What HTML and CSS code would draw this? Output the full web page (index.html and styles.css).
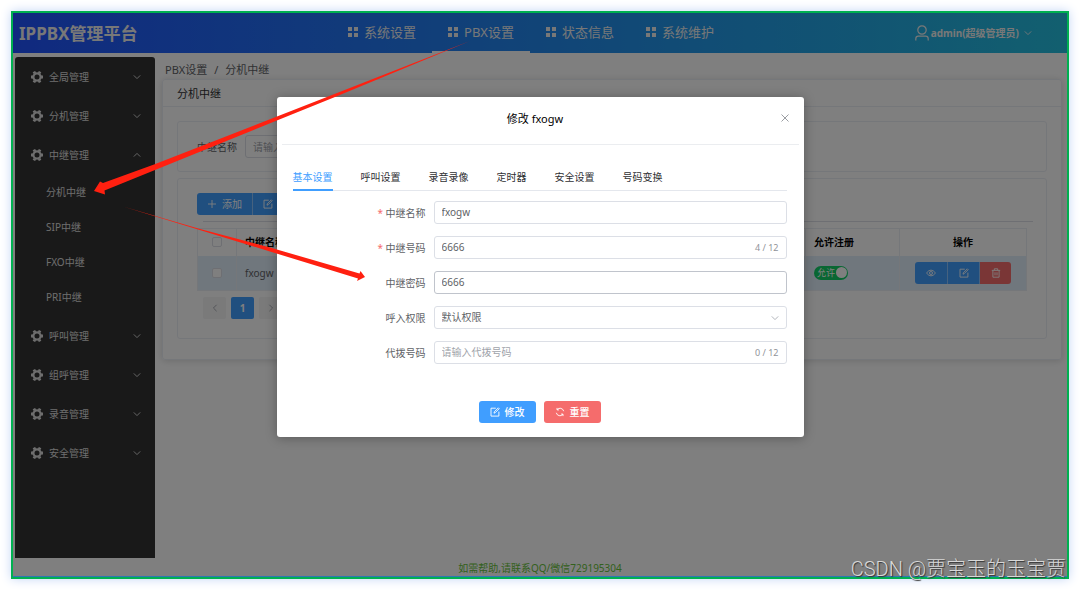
FILE: index.html
```html
<!DOCTYPE html>
<html lang="zh-CN">
<head>
<meta charset="utf-8">
<title>IPPBX管理平台</title>
<link rel="stylesheet" href="styles.css">
</head>
<body>
<svg class="defs" aria-hidden="true">
  <symbol id="grid" viewBox="0 0 10 10"><path fill="currentColor" d="M0 0h4v4H0zM6 0h4v4H6zM0 6h4v4H0zM6 6h4v4H6z"/></symbol>
  <symbol id="gear" viewBox="0 0 12 12"><circle cx="6" cy="6" r="3.600" fill="none" stroke="currentColor" stroke-width="2.200"/><path d="M2.900 .6l1 1.800M9.100 .6l-1 1.800M2.900 11.400l1-1.800M9.100 11.400l-1-1.800M0 6h2M10 6h2" stroke="currentColor" stroke-width="2.800"/></symbol>
  <symbol id="down" viewBox="0 0 8 8"><path d="M.8 2.4L4 5.6l3.2-3.2" fill="none" stroke="currentColor" stroke-width=".9"/></symbol>
  <symbol id="up" viewBox="0 0 8 8"><path d="M.8 5.6L4 2.4l3.2 3.2" fill="none" stroke="currentColor" stroke-width=".9"/></symbol>
  <symbol id="left" viewBox="0 0 8 8"><path d="M5.6 .8L2.4 4l3.2 3.2" fill="none" stroke="currentColor"/></symbol>
  <symbol id="right" viewBox="0 0 8 8"><path d="M2.4 .8L5.6 4 2.4 7.2" fill="none" stroke="currentColor"/></symbol>
  <symbol id="user" viewBox="0 0 14 16"><g fill="none" stroke="currentColor" stroke-width="1.2"><circle cx="7" cy="5" r="4.2"/><path d="M.8 15.5v-1.8q0-2.6 2.6-2.6h7.2q2.6 0 2.6 2.6v1.8"/></g></symbol>
  <symbol id="edit" viewBox="0 0 10 10"><path d="M5.8 1.2H1v7.9h7.9V4.6M4 6.2L4.3 4.8 8.3.8l.9.9-4 4z" fill="none" stroke="currentColor" stroke-width=".9"/></symbol>
  <symbol id="plus" viewBox="0 0 10 10"><path d="M5 1v8M1 5h8" stroke="currentColor" stroke-width=".9"/></symbol>
  <symbol id="eye" viewBox="0 0 10 10"><g fill="none" stroke="currentColor" stroke-width=".9"><path d="M.5 5Q5-.8 9.5 5 5 10.8.5 5z"/><circle cx="5" cy="5" r="1.5"/></g></symbol>
  <symbol id="trash" viewBox="0 0 10 10"><path d="M.8 2.4h8.4M3.3 2.2V.8h3.4v1.4M1.9 2.6v6.6h6.2V2.6M4 4.3v3M6 4.3v3" fill="none" stroke="currentColor" stroke-width=".9"/></symbol>
  <symbol id="refresh" viewBox="0 0 10 10"><path d="M8.7 4.2A3.8 3.8 0 0 0 2 2.7M2 .9v2h2M1.3 5.8A3.8 3.8 0 0 0 8 7.3M8 9.1v-2H6" fill="none" stroke="currentColor" stroke-width=".9"/></symbol>
  <symbol id="close" viewBox="0 0 10 10"><path d="M1.5 1.5l7 7M8.5 1.5l-7 7" stroke="currentColor" stroke-width=".9"/></symbol>
</svg>

<div class="frame">
  <header class="topbar">
    <h1 class="logo">IPPBX管理平台</h1>
    <nav class="topnav">
      <a href="#"><svg class="icon"><use href="#grid"/></svg>系统设置</a>
      <a href="#" class="active"><svg class="icon"><use href="#grid"/></svg>PBX设置</a>
      <a href="#"><svg class="icon"><use href="#grid"/></svg>状态信息</a>
      <a href="#"><svg class="icon"><use href="#grid"/></svg>系统维护</a>
    </nav>
    <button class="user"><svg class="user-icon"><use href="#user"/></svg>admin(超级管理员)<svg class="chev"><use href="#down"/></svg></button>
  </header>

  <div class="main">
    <nav class="sidebar">
      <a href="#" class="group"><svg class="gear"><use href="#gear"/></svg><span>全局管理</span><svg class="chev"><use href="#down"/></svg></a>
      <a href="#" class="group"><svg class="gear"><use href="#gear"/></svg><span>分机管理</span><svg class="chev"><use href="#down"/></svg></a>
      <a href="#" class="group"><svg class="gear"><use href="#gear"/></svg><span>中继管理</span><svg class="chev"><use href="#up"/></svg></a>
      <div class="submenu">
        <a href="#">分机中继</a>
        <a href="#">SIP中继</a>
        <a href="#">FXO中继</a>
        <a href="#">PRI中继</a>
      </div>
      <a href="#" class="group"><svg class="gear"><use href="#gear"/></svg><span>呼叫管理</span><svg class="chev"><use href="#down"/></svg></a>
      <a href="#" class="group"><svg class="gear"><use href="#gear"/></svg><span>组呼管理</span><svg class="chev"><use href="#down"/></svg></a>
      <a href="#" class="group"><svg class="gear"><use href="#gear"/></svg><span>录音管理</span><svg class="chev"><use href="#down"/></svg></a>
      <a href="#" class="group"><svg class="gear"><use href="#gear"/></svg><span>安全管理</span><svg class="chev"><use href="#down"/></svg></a>
    </nav>

    <main class="content">
      <div class="crumbs"><a href="#">PBX设置</a><span>/</span><span>分机中继</span></div>
      <section class="card">
        <h2 class="card-title">分机中继</h2>
        <div class="card-body">
          <form class="panel search">
            <label for="q">中继名称</label>
            <input id="q" type="text" placeholder="请输入">
          </form>
          <div class="panel list">
            <div class="tools">
              <button class="btn blue"><svg class="icon"><use href="#plus"/></svg>添加</button>
              <button class="btn blue" aria-label="修改"><svg class="icon"><use href="#edit"/></svg></button>
            </div>
            <hr class="rule">
            <table class="table">
              <colgroup><col class="c-check"><col><col class="c-reg"><col class="c-act"></colgroup>
              <thead><tr>
                <th class="mid"><input type="checkbox" class="check" aria-label="全选"></th>
                <th>中继名称</th><th>允许注册</th><th class="mid">操作</th>
              </tr></thead>
              <tbody><tr>
                <td class="mid"><input type="checkbox" class="check" aria-label="选择 fxogw"></td>
                <td>fxogw</td>
                <td><button class="switch" role="switch" aria-checked="true"><span>允许</span><i></i></button></td>
                <td class="mid"><div class="acts">
                  <button class="btn blue" aria-label="查看"><svg class="icon"><use href="#eye"/></svg></button>
                  <button class="btn blue" aria-label="编辑"><svg class="icon"><use href="#edit"/></svg></button>
                  <button class="btn red" aria-label="删除"><svg class="icon"><use href="#trash"/></svg></button>
                </div></td>
              </tr></tbody>
            </table>
            <div class="pager">
              <button aria-label="上一页"><svg class="chev"><use href="#left"/></svg></button>
              <button class="current">1</button>
              <button aria-label="下一页"><svg class="chev"><use href="#right"/></svg></button>
            </div>
          </div>
        </div>
      </section>
    </main>
  </div>
  <footer class="footer">如需帮助,请联系QQ/微信729195304</footer>

  <div class="overlay">
    <div class="dialog" role="dialog" aria-labelledby="dlg-title">
      <div class="dialog-head">
        <h2 id="dlg-title">修改 fxogw</h2>
        <button class="close" aria-label="关闭"><svg class="icon"><use href="#close"/></svg></button>
      </div>
      <div class="dialog-body">
        <div class="tabs" role="tablist">
          <button role="tab" class="on" aria-selected="true">基本设置</button>
          <button role="tab">呼叫设置</button>
          <button role="tab">录音录像</button>
          <button role="tab">定时器</button>
          <button role="tab">安全设置</button>
          <button role="tab">号码变换</button>
        </div>
        <form class="form">
          <label for="f1" class="req">中继名称</label>
          <div class="field"><input id="f1" type="text" value="fxogw"></div>
          <label for="f2" class="req">中继号码</label>
          <div class="field"><input id="f2" type="text" value="6666"><span>4 / 12</span></div>
          <label for="f3">中继密码</label>
          <div class="field hover"><input id="f3" type="text" value="6666"></div>
          <label for="f4">呼入权限</label>
          <div class="field"><select id="f4"><option>默认权限</option></select><svg class="chev"><use href="#down"/></svg></div>
          <label for="f5">代拨号码</label>
          <div class="field"><input id="f5" type="text" placeholder="请输入代拨号码"><span>0 / 12</span></div>
        </form>
        <div class="actions">
          <button class="btn blue strong"><svg class="icon"><use href="#edit"/></svg>修改</button>
          <button class="btn red strong"><svg class="icon"><use href="#refresh"/></svg>重置</button>
        </div>
      </div>
    </div>
  </div>
</div>

<svg class="arrows" viewBox="0 0 1080 590" aria-hidden="true">
  <path fill="#ff2010" d="M470 41L154 164.500 103 183 100 181.500 94 191 105 194.500 104.500 190.500 155 170 335 97z"/>
  <path fill="#ff2010" d="M123 206.500L270 251.500 358 278.500 357 281 365 277 360.500 271 359.500 273.500 270 247.500 200 229z"/>
</svg>
<div class="watermark">CSDN @贾宝玉的玉宝贾</div>
</body>
</html>
```
FILE: styles.css
```css
* { box-sizing: border-box; }
body {
  margin: 0;
  min-height: 100vh;
  padding: 11px;
  display: flex;
  position: relative;
  background: #fff;
  color: #303133;
  font: 10px/16px "Noto Sans", "Noto Sans CJK SC", sans-serif;
}
button, input, select { font: inherit; color: inherit; margin: 0; }
button { border: 0; padding: 0; background: none; cursor: pointer; }
a { color: inherit; text-decoration: none; }
h1, h2 { margin: 0; }
.defs { position: absolute; width: 0; height: 0; }
.icon { width: 10px; height: 10px; flex: none; }
.chev { width: 8px; height: 8px; flex: none; }

.frame {
  flex: 1;
  display: flex;
  flex-direction: column;
  position: relative;
  border: 2px solid #00b050;
  box-shadow: 0 0 10px #c3d5f5;
}

/* Top bar */
.topbar {
  height: 40px;
  display: flex;
  align-items: center;
  background: linear-gradient(to right, #2153ff, #24bfdf);
  color: #f0f0f0;
}
.logo { width: 319px; padding: 2px 0 0 6px; font-size: 17px; line-height: 24px; }
.topnav { display: flex; align-self: stretch; flex: 1; }
.topnav a {
  display: flex;
  align-items: center;
  gap: 6px;
  padding: 0 16px;
  font-size: 13px;
  border-bottom: 2px solid transparent;
}
.topnav .active { border-color: #fff; }
.user { display: flex; align-items: center; margin-right: 35px; font-weight: bold; }
.user-icon { width: 14px; height: 16px; margin-right: 2px; }
.user .chev { margin-left: 5px; }

/* Side menu */
.main { flex: 1; display: flex; gap: 7px; padding: 4px 5px 0 2px; }
.sidebar { width: 140px; background: #333; color: #dcdcdc; border-radius: 3px 3px 0 0; }
.group { display: flex; align-items: center; height: 39px; padding: 0 14px 0 16px; gap: 6px; }
.group span { flex: 1; }
.gear { width: 12px; height: 12px; }
.submenu { padding: 1px 0; }
.submenu a { display: block; line-height: 35px; padding-left: 31px; }

/* Content */
.content { flex: 1; min-width: 0; padding-top: 4px; }
.crumbs { display: flex; gap: 7px; padding-left: 3px; font-size: 11px; line-height: 18px; color: #606266; }
.card { border: 1px solid #ebeef5; border-radius: 3px; box-shadow: 0 1px 7px rgba(0, 0, 0, .15); }
.card-title { padding: 5px 14px 3px; font-size: 11px; line-height: 18px; font-weight: normal; border-bottom: 1px solid #ebeef5; }
.card-body { display: grid; gap: 6px; padding: 14px 14px 20px; }
.panel { border: 1px solid #ebeef5; border-radius: 3px; padding: 14px 19px; }
.search { display: flex; align-items: center; gap: 8px; padding: 13px 19px; color: #606266; }
.search input { width: 160px; height: 23px; padding: 0 7px; border: 1px solid #dcdfe6; border-radius: 3px; background: none; }
.list { padding-bottom: 19px; }
.tools, .acts { display: flex; }
.btn {
  display: inline-flex;
  align-items: center;
  justify-content: center;
  gap: 5px;
  height: 22px;
  padding: 0 11px;
  border-radius: 3px;
  color: #fff;
}
.blue { background: #409eff; }
.red { background: #f56c6c; }
.strong { font-weight: 500; }
.tools .btn { padding: 0 10px; }
.tools .btn + .btn, .acts .btn + .btn { border-left: 1px solid #8cc5ff; border-radius: 0 3px 3px 0; }
.tools .btn:first-child, .acts .btn:first-child { border-radius: 3px 0 0 3px; }
.acts .btn:nth-child(2) { border-radius: 0; }
.acts { justify-content: center; }
.acts .btn { width: 32px; padding: 0; }
.rule { height: 1px; margin: 6px -6px 6px 6px; border: 0; background: #dcdfe6; }
.table { width: 100%; table-layout: fixed; border-collapse: collapse; border: 1px solid #ebeef5; }
.c-check { width: 39px; }
.c-reg { width: 94px; }
.c-act { width: 127px; }
.table th, .table td { padding: 0 8px; text-align: left; border-right: 1px solid #ebeef5; }
.table th { height: 27px; color: #000; }
.table td { height: 35px; background: #e1eefa; color: #606266; }
.table .mid { text-align: center; }
.check {
  appearance: none;
  display: block;
  width: 10px;
  height: 10px;
  margin: 0 auto;
  border: 1px solid #dcdfe6;
  border-radius: 2px;
  background: #fff;
}
.switch {
  display: flex;
  align-items: center;
  gap: 1px;
  width: 34px;
  height: 14px;
  padding: 0 1px 0 3px;
  border-radius: 7px;
  background: #13ce66;
  color: #fff;
  font-size: 9px;
}
.switch i { width: 11px; height: 11px; border-radius: 50%; background: #fff; }
.switch span { flex: 1; text-align: left; white-space: nowrap; }
.pager { display: flex; gap: 5px; padding: 6px 6px 0; }
.pager button { width: 23px; height: 22px; border-radius: 2px; background: #f4f4f5; color: #a8abb2; font-weight: bold; }
.pager .current { background: #409eff; color: #fff; }
.footer { height: 19px; line-height: 20px; text-align: center; color: #67c23a; }

/* Dialog */
.overlay {
  position: absolute;
  inset: 0;
  padding-top: 84px;
  background: rgba(0, 0, 0, .5);
  box-shadow: inset 0 -1px #2f75b5;
}
.dialog { width: 50%; margin: 0 auto; padding-bottom: 14px; background: #fff; border-radius: 3px; box-shadow: 0 1px 12px rgba(0, 0, 0, .3); }
.dialog-head {
  display: flex;
  align-items: center;
  height: 48px;
  margin: 0 5px;
  padding: 0 9px 4px;
  border-bottom: 1px solid #ebedf0;
}
.dialog-head h2 { flex: 1; font-size: 11px; font-weight: normal; text-align: center; color: #000; }
.close { width: 10px; height: 16px; color: #909399; }
.dialog-body { padding: 20px 17px 0 16px; }
.tabs { display: flex; gap: 28px; border-bottom: 1px solid #e4e7ed; }
.tabs button { height: 26px; padding: 0; margin-bottom: -1px; border-bottom: 2px solid transparent; }
.tabs .on { color: #409eff; border-color: #409eff; }
.form { display: grid; grid-template-columns: 133px 1fr; gap: 12px 8px; align-items: center; padding-top: 10px; color: #606266; }
.form label { text-align: right; }
.req::before { content: "* "; color: #f56c6c; }
.field { display: flex; align-items: center; height: 23px; padding: 0 7px; border: 1px solid #dcdfe6; border-radius: 3px; }
.hover { border-color: #c0c4cc; }
.field input, .field select { flex: 1; min-width: 0; height: 21px; padding: 0 0 1px; border: 0; outline: 0; background: none; appearance: none; }
.field span { font-size: 9px; color: #909399; }
.field .chev { color: #a8abb2; }
::placeholder { color: #a0a3aa; }
.actions { display: flex; justify-content: center; gap: 8px; padding: 37px 0 0; }

/* Annotations */
.arrows { position: absolute; left: 0; top: 0; width: 1080px; height: 590px; pointer-events: none; }
.watermark {
  position: absolute;
  right: 14px;
  bottom: 8px;
  font: 20px/26px Roboto, "Noto Sans CJK SC", sans-serif;
  font-weight: 300;
  color: #d8d8d8;
  text-shadow: 1px 1px 1px #333;
}
```
